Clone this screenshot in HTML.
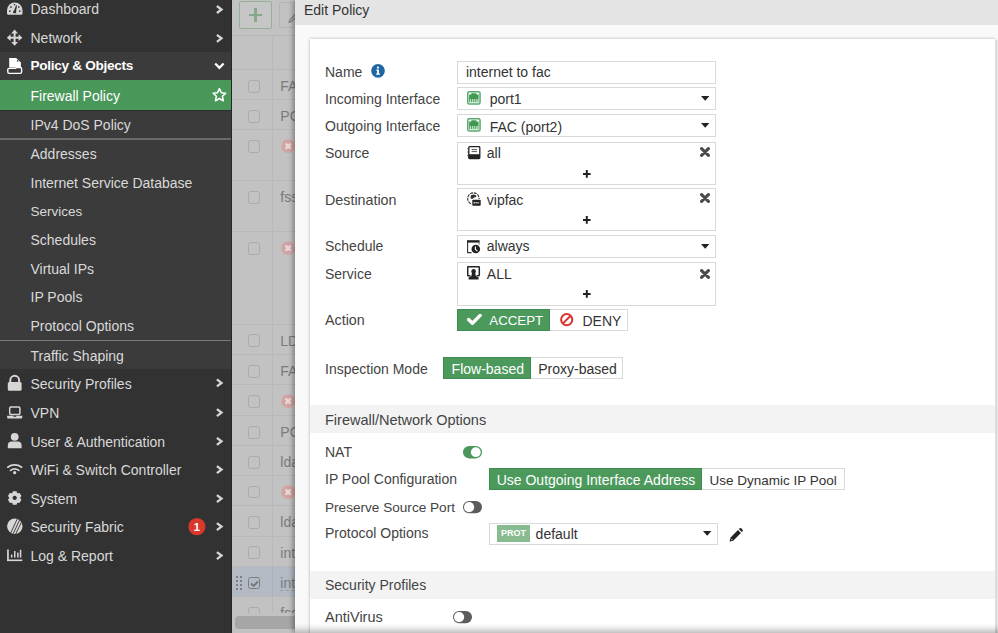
<!DOCTYPE html>
<html><head><meta charset="utf-8">
<style>
*{margin:0;padding:0;box-sizing:border-box}
html,body{width:998px;height:633px;overflow:hidden;background:#fff;font-family:"Liberation Sans",sans-serif;font-size:14px}
.a{position:absolute}
.t{position:absolute;white-space:nowrap;line-height:16px;font-size:14px}
#side{left:0;top:0;width:232px;height:633px;background:#323232}
.st{color:#d9d9d9;left:30.5px}
.ch{position:absolute;left:215px}
#tbl{left:232px;top:0;width:63px;height:633px;background:#fff;overflow:hidden}
#dlg{left:295px;top:0;width:703px;height:633px;background:#f9f9f9;box-shadow:-2px 0 5px rgba(0,0,0,.35)}
.lbl{color:#444;left:30px}
.inp{position:absolute;border:1px solid #d9d9d9;background:#fff}
.itx{color:#333}
.cbx{left:15.7px;width:12.8px;height:12.8px;border:1.4px solid #ababab;border-radius:2.5px}
.rl{left:0;width:63px;height:1px;background:#b8b8b8}
.dot{width:2.2px;height:2.2px;background:#7a8087}
.ttx{left:48.3px;color:#7a7a7a}
</style></head>
<body>
<!-- SIDEBAR -->
<div id="side" class="a">
  <div class="a" style="left:0;top:52px;width:231px;height:317px;background:#3b3b3b"></div>
  <div class="a" style="left:0;top:80px;width:231px;height:29.5px;background:#4a975a"></div>
  <div class="a" style="left:0;top:109.5px;width:231px;height:1px;background:#2e2e2e"></div>
  <div class="a" style="left:0;top:138.3px;width:231px;height:2px;background:#6a6a6a"></div>
  <div class="a" style="left:0;top:340px;width:231px;height:1px;background:#7a7a7a"></div>
  <div class="a" style="left:231px;top:0;width:1px;height:633px;background:#262626"></div>

  <div class="t st" style="top:1px">Dashboard</div>
  <div class="t st" style="top:29.8px">Network</div>
  <div class="t st" style="top:58px;color:#fff;font-weight:bold;font-size:13.6px;letter-spacing:-0.3px">Policy &amp; Objects</div>
  <div class="t st" style="top:88.1px;color:#fff">Firewall Policy</div>
  <div class="t st" style="top:117.1px">IPv4 DoS Policy</div>
  <div class="t st" style="top:146px">Addresses</div>
  <div class="t st" style="top:174.9px">Internet Service Database</div>
  <div class="t st" style="top:203.5px;font-size:13.5px">Services</div>
  <div class="t st" style="top:232px">Schedules</div>
  <div class="t st" style="top:260.6px">Virtual IPs</div>
  <div class="t st" style="top:289.2px">IP Pools</div>
  <div class="t st" style="top:318.3px">Protocol Options</div>
  <div class="t st" style="top:347.5px">Traffic Shaping</div>
  <div class="t st" style="top:375.6px">Security Profiles</div>
  <div class="t st" style="top:405.3px">VPN</div>
  <div class="t st" style="top:434px">User &amp; Authentication</div>
  <div class="t st" style="top:462.3px">WiFi &amp; Switch Controller</div>
  <div class="t st" style="top:491.3px">System</div>
  <div class="t st" style="top:519.3px">Security Fabric</div>
  <div class="t st" style="top:548.3px">Log &amp; Report</div>
  <svg class="a" style="left:0;top:0" width="232" height="633" viewBox="0 0 232 633">
    <g fill="#d6d6d6">
      <!-- dashboard gauge -->
      <path d="M8,14.7 H21.5 Q22.5,14.7 22.5,13.6 V10.2 A7.75,7.75 0 0 0 7,10.2 V13.6 Q7,14.7 8,14.7 Z"/>
      <g fill="#323232">
        <rect x="9.1" y="10.4" width="1.5" height="1.5"/><rect x="10.2" y="6.3" width="1.5" height="1.5"/>
        <rect x="18" y="6.3" width="1.5" height="1.5"/><rect x="19" y="10.4" width="1.5" height="1.5"/>
        <rect x="13.9" y="4" width="1.3" height="1.3"/>
        <path d="M13.3,12.6 L16.1,5.2 L17,5.5 L15.9,12.6 Z"/>
        <rect x="13.3" y="11" width="2.8" height="2.2"/>
      </g>
      <!-- network arrows -->
      <path d="M14.6,29.6 L18,33.4 L11.2,33.4 Z M14.6,45.7 L18,41.9 L11.2,41.9 Z M6.8,37.7 L10.6,34.3 L10.6,41.1 Z M22.4,37.7 L18.6,34.3 L18.6,41.1 Z"/>
      <rect x="13.6" y="32.5" width="2" height="10.3"/><rect x="10" y="36.7" width="9.2" height="2"/>
      <!-- lock -->
      <path d="M10.3,382.5 V380.2 A4.4,4.4 0 0 1 19.1,380.2 V382.5" fill="none" stroke="#d6d6d6" stroke-width="2"/>
      <rect x="7.8" y="382" width="13.8" height="8.8" rx="1.5"/>
      <!-- laptop -->
      <rect x="9.7" y="407" width="10.2" height="7.5" rx="1.2" fill="none" stroke="#d6d6d6" stroke-width="1.5"/>
      <path d="M7.1,415.8 H13.4 V416.8 H16.2 V415.8 H22.3 V417.2 Q22.3,418.4 21.1,418.4 H8.3 Q7.1,418.4 7.1,417.2 Z"/>
      <!-- user -->
      <circle cx="14.7" cy="436.8" r="3.9"/>
      <path d="M7.8,448.3 V445.6 Q7.8,441.6 11.8,441.6 H17.6 Q21.6,441.6 21.6,445.6 V448.3 Z"/>
      <!-- wifi -->
      <path d="M7.8,467.2 A11.5,11.5 0 0 1 21.6,467.2 M10.6,470.4 A7,7 0 0 1 18.8,470.4" fill="none" stroke="#d6d6d6" stroke-width="1.7" stroke-linecap="round"/>
      <circle cx="14.7" cy="472.7" r="1.6"/>
      <!-- gear -->
      <path fill-rule="evenodd" d="M11.98,493.47 L12.90,491.14 L16.50,491.14 L17.42,493.47 L17.18,493.33 L19.66,492.96 L21.46,496.08 L19.90,498.04 L19.90,497.76 L21.46,499.72 L19.66,502.84 L17.18,502.47 L17.42,502.33 L16.50,504.66 L12.90,504.66 L11.98,502.33 L12.22,502.47 L9.74,502.84 L7.94,499.72 L9.50,497.76 L9.50,498.04 L7.94,496.08 L9.74,492.96 L12.22,493.33Z M14.7,495.8 A2.1,2.1 0 1 0 14.71,495.8 Z"/>
      <!-- security fabric -->
      <circle cx="14.8" cy="526.3" r="7.7"/>
      <path d="M17.3,518.9 L10.6,533.2 M19.6,520.1 L13.1,533.9 M21.4,522.2 L15.7,534.1" stroke="#323232" stroke-width="0.9"/>
      <!-- log & report -->
      <rect x="7.1" y="549.5" width="1.7" height="11.6"/><rect x="7.1" y="559.5" width="15.2" height="1.6"/>
      <rect x="10.9" y="554.6" width="1.5" height="3"/><rect x="14" y="551" width="1.5" height="6.6"/>
      <rect x="17.1" y="552.6" width="1.5" height="5"/><rect x="19.8" y="549.8" width="1.5" height="7.8"/>
    </g>
    <!-- policy icon -->
    <g fill="#fff">
      <path d="M9.2,58.1 H16.1 L20.9,62.6 V67.6 H9.2 Z"/>
      <circle cx="17.6" cy="60.9" r="0.8" fill="#3b3b3b"/>
      <path d="M9,68.4 H15.5 L16.6,67.5 H20.4 Q21.6,67.5 21.6,68.9 V72 Q21.6,73.4 20.2,73.4 H9.2 Q7.8,73.4 7.8,72 V69.8 Q7.8,68.4 9,68.4 Z" fill="none" stroke="#fff" stroke-width="1.4"/>
    </g>
    <!-- chevrons -->
    <g fill="none" stroke="#d6d6d6" stroke-width="2.3">
      <path d="M216.9,6.0 L221.5,9.5 L216.9,13.0"/>
      <path d="M216.9,34.8 L221.5,38.3 L216.9,41.8"/>
      <path d="M216.9,379.4 L221.5,382.9 L216.9,386.4"/>
      <path d="M216.9,409.1 L221.5,412.6 L216.9,416.1"/>
      <path d="M216.9,437.8 L221.5,441.3 L216.9,444.8"/>
      <path d="M216.9,466.1 L221.5,469.6 L216.9,473.1"/>
      <path d="M216.9,495.1 L221.5,498.6 L216.9,502.1"/>
      <path d="M216.9,523.1 L221.5,526.6 L216.9,530.1"/>
      <path d="M216.9,552.1 L221.5,555.6 L216.9,559.1"/>
      <path d="M215.2,63.4 L219.4,67.8 L223.6,63.4" stroke="#fff" stroke-width="2.2"/>
    </g>
    <!-- star -->
    <path d="M219.4,88.6 L221.3,92.7 L225.7,93.2 L222.4,96.2 L223.3,100.8 L219.4,98.5 L215.5,100.8 L216.4,96.2 L213.1,93.2 L217.5,92.7 Z" fill="none" stroke="#fff" stroke-width="1.55" stroke-linejoin="round"/>
    <!-- badge -->
    <circle cx="196.9" cy="526.6" r="8.6" fill="#d9392b"/>
    <text x="196.9" y="530.7" fill="#fff" font-family="Liberation Sans" font-weight="bold" font-size="11" text-anchor="middle">1</text>
  </svg>
</div>

<!-- TABLE -->
<div id="tbl" class="a">
<div class="a" style="left:0;top:0;width:63px;height:633px;background:#c2c2c2"></div>
<div class="a" style="left:0;top:35px;width:63px;height:1px;background:#b6b6b6"></div>
<div class="a" style="left:40px;top:35.5px;width:1px;height:577px;background:#bababa"></div>
<div class="a rl" style="top:69.4px"></div>
<div class="a cbx" style="top:79.9px"></div>
<div class="t ttx" style="top:78.4px">FA</div>
<div class="a rl" style="top:99.3px"></div>
<div class="a cbx" style="top:109.8px"></div>
<div class="t ttx" style="top:108.3px">PO</div>
<div class="a rl" style="top:129.4px"></div>
<div class="a cbx" style="top:139.9px"></div>
<svg class="a" style="left:48.5px;top:139.0px" width="15" height="15"><circle cx="7.2" cy="7.2" r="6.9" fill="#d3a4a4"/><path d="M4.6,4.6 L9.8,9.8 M9.8,4.6 L4.6,9.8" stroke="#e6dada" stroke-width="2.3"/></svg>
<div class="a rl" style="top:180.3px"></div>
<div class="a cbx" style="top:190.8px"></div>
<div class="t ttx" style="top:189.3px">fss</div>
<div class="a rl" style="top:231.4px"></div>
<div class="a cbx" style="top:241.9px"></div>
<svg class="a" style="left:48.5px;top:241.0px" width="15" height="15"><circle cx="7.2" cy="7.2" r="6.9" fill="#d3a4a4"/><path d="M4.6,4.6 L9.8,9.8 M9.8,4.6 L4.6,9.8" stroke="#e6dada" stroke-width="2.3"/></svg>
<div class="a rl" style="top:323.8px"></div>
<div class="a cbx" style="top:334.3px"></div>
<div class="t ttx" style="top:332.8px">LD</div>
<div class="a rl" style="top:354.3px"></div>
<div class="a cbx" style="top:364.8px"></div>
<div class="t ttx" style="top:363.3px">FA</div>
<div class="a rl" style="top:384.4px"></div>
<div class="a cbx" style="top:394.9px"></div>
<svg class="a" style="left:48.5px;top:394.0px" width="15" height="15"><circle cx="7.2" cy="7.2" r="6.9" fill="#d3a4a4"/><path d="M4.6,4.6 L9.8,9.8 M9.8,4.6 L4.6,9.8" stroke="#e6dada" stroke-width="2.3"/></svg>
<div class="a rl" style="top:415.4px"></div>
<div class="a cbx" style="top:425.9px"></div>
<div class="t ttx" style="top:424.4px">PO</div>
<div class="a rl" style="top:445.3px"></div>
<div class="a cbx" style="top:455.8px"></div>
<div class="t ttx" style="top:454.3px">lda</div>
<div class="a rl" style="top:475.1px"></div>
<div class="a cbx" style="top:485.6px"></div>
<svg class="a" style="left:48.5px;top:484.7px" width="15" height="15"><circle cx="7.2" cy="7.2" r="6.9" fill="#d3a4a4"/><path d="M4.6,4.6 L9.8,9.8 M9.8,4.6 L4.6,9.8" stroke="#e6dada" stroke-width="2.3"/></svg>
<div class="a rl" style="top:505.3px"></div>
<div class="a cbx" style="top:515.8px"></div>
<div class="t ttx" style="top:514.3px">lda</div>
<div class="a rl" style="top:535.7px"></div>
<div class="a cbx" style="top:546.2px"></div>
<div class="t ttx" style="top:544.7px">int</div>
<div class="a rl" style="top:566.2px"></div>
<div class="a" style="left:0;top:566.7px;width:63px;height:29.5px;background:#b3bac4"></div>
<div class="a" style="left:40px;top:566.7px;width:1px;height:29.5px;background:#aab1ba"></div>
<div class="a cbx" style="top:576.7px;border-color:#7d7d7d;border-width:1.7px"></div>
<svg class="a" style="left:15.7px;top:576.7px" width="13" height="13"><path d="M3.1,6.5 L5.6,9 L10,4.3" fill="none" stroke="#767676" stroke-width="1.8"/></svg>
<div class="a dot" style="left:3.5px;top:575.5px"></div>
<div class="a dot" style="left:3.5px;top:579.5px"></div>
<div class="a dot" style="left:3.5px;top:583.5px"></div>
<div class="a dot" style="left:3.5px;top:587.5px"></div>
<div class="a dot" style="left:7.5px;top:575.5px"></div>
<div class="a dot" style="left:7.5px;top:579.5px"></div>
<div class="a dot" style="left:7.5px;top:583.5px"></div>
<div class="a dot" style="left:7.5px;top:587.5px"></div>
<div class="t ttx" style="top:575.2px">int</div>
<div class="a" style="left:48px;top:589.7px;width:20px;height:0;border-top:1px dashed #9aa0a8"></div>
<div class="a rl" style="top:596.2px"></div>
<div class="a cbx" style="top:606.7px"></div>
<div class="t ttx" style="top:605.2px">fss</div>
<div class="a" style="left:0;top:612.8px;width:63px;height:20.2px;background:#c2c2c2"></div>
<div class="a" style="left:3px;top:615.5px;width:80px;height:13.4px;background:#a6a6a6;border-radius:4px"></div>
<div class="a" style="left:7.4px;top:1.4px;width:32.9px;height:27.2px;border:1.4px solid #93b19a;border-radius:2px;background:#c6c6c6"></div>
<div class="a" style="left:17px;top:13.7px;width:13.4px;height:2.6px;background:#86a98d"></div>
<div class="a" style="left:22.4px;top:8.3px;width:2.6px;height:13.4px;background:#86a98d"></div>
<div class="a" style="left:47.4px;top:1.7px;width:40px;height:26.5px;border:1px solid #b5b5b5;border-radius:2px"></div>
<svg class="a" style="left:53px;top:8px" width="14" height="16"><path d="M6.5,13.5 L4.2,14.2 L4.9,11.9 L11,5.8 L12.6,7.4 Z" fill="none" stroke="#8a8a8a" stroke-width="1.4"/></svg>
</div>

<!-- DIALOG -->
<div id="dlg" class="a">
  <div class="a" style="left:0;top:0;width:703px;height:24.5px;background:#e4e4e4"></div>
  <div class="t" style="left:9px;top:2px;color:#333">Edit Policy</div>
  <div class="a" style="left:701px;top:40px;width:2px;height:600px;background:#e9e9e9"></div>
  <div class="a" style="left:14.6px;top:38.6px;width:685.8px;height:600px;background:#fff;box-shadow:0 0 3px rgba(0,0,0,.3)"></div>
</div>
<div id="form">
<div class="a" style="left:309.6px;top:405.4px;width:685.8px;height:28.1px;background:#f3f3f3"></div>
<div class="a" style="left:309.6px;top:571px;width:685.8px;height:27.6px;background:#f3f3f3"></div>
<div class="t" style="left:325px;top:64.0px;color:#444;">Name</div>
<div class="t" style="left:325px;top:90.6px;color:#444;">Incoming Interface</div>
<div class="t" style="left:325px;top:118.0px;color:#444;">Outgoing Interface</div>
<div class="t" style="left:325px;top:144.8px;color:#444;">Source</div>
<div class="t" style="left:325px;top:192.2px;color:#444;font-size:14.3px">Destination</div>
<div class="t" style="left:325px;top:237.9px;color:#444;">Schedule</div>
<div class="t" style="left:325px;top:265.6px;color:#444;">Service</div>
<div class="t" style="left:325px;top:311.8px;color:#444;font-size:14.3px">Action</div>
<div class="t" style="left:325px;top:360.9px;color:#444;">Inspection Mode</div>
<div class="t" style="left:325px;top:411.8px;color:#444;font-size:14.5px">Firewall/Network Options</div>
<div class="t" style="left:325px;top:444.4px;color:#444;">NAT</div>
<div class="t" style="left:325px;top:471.3px;color:#444;">IP Pool Configuration</div>
<div class="t" style="left:325px;top:499.6px;color:#444;font-size:13.6px">Preserve Source Port</div>
<div class="t" style="left:325px;top:525.2px;color:#444;">Protocol Options</div>
<div class="t" style="left:325px;top:577.2px;color:#444;">Security Profiles</div>
<div class="t" style="left:325px;top:609.0px;color:#444;font-size:14.5px">AntiVirus</div>
<svg class="a" style="left:371px;top:63.7px" width="14" height="14"><circle cx="7" cy="6.85" r="6.85" fill="#1f66a3"/><circle cx="7" cy="3.6" r="1.15" fill="#fff"/><path d="M5.3,5.6 H7.9 V9.6 H8.9 V10.8 H5.1 V9.6 H6.1 V6.8 H5.3 Z" fill="#fff"/></svg>
<div class="inp" style="left:457.3px;top:60.7px;width:258.7px;height:23.1px;"></div>
<div class="inp" style="left:457.3px;top:87.2px;width:258.7px;height:22.8px;"></div>
<div class="inp" style="left:457.3px;top:114.2px;width:258.7px;height:23.1px;"></div>
<div class="inp" style="left:457.3px;top:142.3px;width:258.7px;height:43.1px;"></div>
<div class="inp" style="left:457.3px;top:188.4px;width:258.7px;height:43.1px;"></div>
<div class="inp" style="left:457.3px;top:235px;width:258.7px;height:22.8px;"></div>
<div class="inp" style="left:457.3px;top:262.2px;width:258.7px;height:43.4px;"></div>
<div class="t" style="left:465.9px;top:63.5px;color:#333;">internet to fac</div>
<div class="t" style="left:489.7px;top:90.7px;color:#333;">port1</div>
<div class="t" style="left:489.7px;top:118.5px;color:#333;">FAC (port2)</div>
<div class="t" style="left:486.8px;top:144.8px;color:#333;">all</div>
<div class="t" style="left:486.8px;top:191.6px;color:#333;">vipfac</div>
<div class="t" style="left:486.8px;top:238.1px;color:#333;">always</div>
<div class="t" style="left:486.8px;top:265.9px;color:#333;">ALL</div>
<svg class="a" style="left:700.9px;top:96.0px" width="9" height="5"><path d="M0,0 H8.4 L4.2,4.8 Z" fill="#222"/></svg>
<svg class="a" style="left:700.9px;top:123.1px" width="9" height="5"><path d="M0,0 H8.4 L4.2,4.8 Z" fill="#222"/></svg>
<svg class="a" style="left:700.9px;top:244.0px" width="9" height="5"><path d="M0,0 H8.4 L4.2,4.8 Z" fill="#222"/></svg>
<svg class="a" style="left:700px;top:146.9px" width="10" height="10"><path d="M1.6,1.6 L8.4,8.4 M8.4,1.6 L1.6,8.4" stroke="#4a4a4a" stroke-width="3.1" stroke-linecap="round"/></svg>
<svg class="a" style="left:700px;top:193.0px" width="10" height="10"><path d="M1.6,1.6 L8.4,8.4 M8.4,1.6 L1.6,8.4" stroke="#4a4a4a" stroke-width="3.1" stroke-linecap="round"/></svg>
<svg class="a" style="left:700px;top:268.7px" width="10" height="10"><path d="M1.6,1.6 L8.4,8.4 M8.4,1.6 L1.6,8.4" stroke="#4a4a4a" stroke-width="3.1" stroke-linecap="round"/></svg>
<svg class="a" style="left:582.8px;top:170.0px" width="8" height="8"><path d="M3.8,0 V7.8 M0,3.9 H7.6" stroke="#222" stroke-width="2"/></svg>
<svg class="a" style="left:582.8px;top:216.4px" width="8" height="8"><path d="M3.8,0 V7.8 M0,3.9 H7.6" stroke="#222" stroke-width="2"/></svg>
<svg class="a" style="left:582.8px;top:290.4px" width="8" height="8"><path d="M3.8,0 V7.8 M0,3.9 H7.6" stroke="#222" stroke-width="2"/></svg>
<svg class="a" style="left:467px;top:91.2px" width="14" height="14"><rect x="0.75" y="0.75" width="12.3" height="12.3" rx="1.6" fill="#fff" stroke="#5aa96b" stroke-width="1.5"/><path d="M2.1,3.4 H4.3 V2.3 H9.4 V3.4 H11.6 V12 H2.1 Z" fill="#3f9a52"/><path d="M3.5,8 V11.6 M5.4,8 V11.6 M7.3,8 V11.6 M9.2,8 V11.6 M10.9,8 V11.6" stroke="#d8eedc" stroke-width="0.9"/><path d="M2.1,11.4 H11.6" stroke="#fff" stroke-width="0.8"/></svg>
<svg class="a" style="left:467px;top:118.3px" width="14" height="14"><rect x="0.75" y="0.75" width="12.3" height="12.3" rx="1.6" fill="#fff" stroke="#5aa96b" stroke-width="1.5"/><path d="M2.1,3.4 H4.3 V2.3 H9.4 V3.4 H11.6 V12 H2.1 Z" fill="#3f9a52"/><path d="M3.5,8 V11.6 M5.4,8 V11.6 M7.3,8 V11.6 M9.2,8 V11.6 M10.9,8 V11.6" stroke="#d8eedc" stroke-width="0.9"/><path d="M2.1,11.4 H11.6" stroke="#fff" stroke-width="0.8"/></svg>
<svg class="a" style="left:467px;top:145.9px" width="14" height="14"><rect x="1.8" y="0.7" width="11" height="11.8" rx="0.8" fill="#fff" stroke="#222" stroke-width="1.3"/><rect x="1.8" y="8.2" width="11" height="4.5" fill="#222"/><path d="M4.6,3.6 H10 M4.6,5.6 H10" stroke="#555" stroke-width="1"/><circle cx="0.9" cy="2.6" r="0.6" fill="#444"/><circle cx="0.9" cy="5.9" r="0.6" fill="#444"/><circle cx="0.9" cy="9.4" r="0.6" fill="#444"/></svg>
<svg class="a" style="left:467px;top:191.9px" width="14" height="14"><circle cx="6.4" cy="6.6" r="5.7" fill="none" stroke="#333" stroke-width="1.1" stroke-dasharray="3,0.8"/><path d="M4,3.3 L6.5,2.4 L8.6,3 L9.6,4.6 L7.4,5.6 L5.2,7 L3.4,6.2 Z" fill="#333"/><rect x="4.6" y="7" width="9.4" height="7" rx="1" fill="#fff"/><rect x="5.3" y="7.7" width="8.4" height="6" rx="0.9" fill="#222"/><path d="M6.6,10.7 H12.4" stroke="#ddd" stroke-width="1.4" stroke-dasharray="1.3,0.6"/></svg>
<svg class="a" style="left:467.2px;top:239.6px" width="14" height="14"><path d="M0.6,2 V12.6 H4.6" fill="none" stroke="#333" stroke-width="1.1"/><rect x="0" y="0.2" width="12.6" height="2.4" fill="#222"/><path d="M12.1,2.4 V4.8" stroke="#666" stroke-width="1"/><circle cx="8.8" cy="9" r="4.3" fill="#222"/><path d="M8.4,6.6 V9.4 L10.4,11.2" fill="none" stroke="#fff" stroke-width="1.1"/></svg>
<svg class="a" style="left:467.2px;top:266.1px" width="14" height="14"><path d="M3.4,9.8 H1.4 Q0.7,9.8 0.7,9.1 V1.4 Q0.7,0.7 1.4,0.7 H11.6 Q12.3,0.7 12.3,1.4 V9.1 Q12.3,9.8 11.6,9.8 H9.6" fill="none" stroke="#222" stroke-width="1.5"/><circle cx="6.6" cy="5.4" r="2.3" fill="#222"/><path d="M4.9,7 H8.3 L8.8,10 L11.6,11.6 V13.6 H1.6 V11.6 L4.4,10 Z" fill="#222"/></svg>
<div class="a" style="left:457.4px;top:308.9px;width:92.6px;height:22.2px;background:#4c995c;border:1px solid #3e8c4f"></div>
<svg class="a" style="left:466.5px;top:314px" width="15" height="12"><path d="M1.6,5.6 L5.4,9.2 L13.2,1.4" fill="none" stroke="#fff" stroke-width="3.4" stroke-linecap="round" stroke-linejoin="round"/></svg>
<div class="t" style="left:489.3px;top:313.0px;color:#fff;font-size:13.3px">ACCEPT</div>
<div class="inp" style="left:550px;top:308.9px;width:77.6px;height:22.2px;border-left:0"></div>
<svg class="a" style="left:559.5px;top:313.2px" width="14" height="14"><circle cx="6.7" cy="6.7" r="5.6" fill="none" stroke="#d9342b" stroke-width="2"/><path d="M2.8,10.6 L10.6,2.8" stroke="#d9342b" stroke-width="2"/></svg>
<div class="t" style="left:582.5px;top:313.0px;color:#333;">DENY</div>
<div class="a" style="left:443px;top:357.4px;width:87.6px;height:22.1px;background:#4c995c;border:1px solid #3e8c4f"></div>
<div class="t" style="left:451.6px;top:360.5px;color:#fff;">Flow-based</div>
<div class="inp" style="left:530.6px;top:357.4px;width:92.8px;height:22.1px;border-left:0"></div>
<div class="t" style="left:538.2px;top:360.5px;color:#333;">Proxy-based</div>
<svg class="a" style="left:462.8px;top:446.3px" width="20" height="13"><rect x="0" y="0" width="19" height="12.4" rx="6.2" fill="#4a975a"/><circle cx="12.8" cy="6.2" r="4.9" fill="#fff"/></svg>
<div class="a" style="left:488.7px;top:467.6px;width:213px;height:22.6px;background:#4c995c;border:1px solid #3e8c4f"></div>
<div class="t" style="left:496.7px;top:472.2px;color:#fff;">Use Outgoing Interface Address</div>
<div class="inp" style="left:701.7px;top:467.6px;width:143.5px;height:22.6px;border-left:0"></div>
<div class="t" style="left:709.5px;top:472.6px;color:#333;font-size:13.5px">Use Dynamic IP Pool</div>
<svg class="a" style="left:463px;top:500.7px" width="20" height="13"><rect x="0" y="0" width="19" height="12.2" rx="6.1" fill="#5c5c5c"/><circle cx="6.1" cy="6.1" r="5.1" fill="#fff"/></svg>
<svg class="a" style="left:452.6px;top:611.3px" width="20" height="13"><rect x="0" y="0" width="19" height="12.2" rx="6.1" fill="#5c5c5c"/><circle cx="6.1" cy="6.1" r="5.1" fill="#fff"/></svg>
<div class="inp" style="left:488.7px;top:522.5px;width:229.5px;height:22.0px;"></div>
<div class="a" style="left:496.8px;top:525.2px;width:33.5px;height:16.8px;background:#88bb8f;color:#fff;font-weight:bold;font-size:9px;line-height:16.8px;text-align:center">PROT</div>
<div class="t" style="left:535.6px;top:526.0px;color:#333;">default</div>
<svg class="a" style="left:702.8px;top:530.6px" width="9" height="5"><path d="M0,0 H8.4 L4.2,4.8 Z" fill="#222"/></svg>
<svg class="a" style="left:729px;top:527.6px" width="14" height="14"><path d="M0.6,13.4 L1.3,9.8 L9,2.1 L11.9,5 L4.2,12.7 Z" fill="#222"/><path d="M1.9,10.6 L3.4,12.1" stroke="#fff" stroke-width="0.9"/><path d="M9.9,1.2 L11,0.2 Q11.5,-0.2 12,0.2 L13.8,2 Q14.2,2.5 13.8,3 L12.8,4.1 Z" fill="#222"/></svg>
<div class="a" style="left:295px;top:623px;width:703px;height:10px;background:linear-gradient(rgba(0,0,0,0),rgba(0,0,0,.05) 40%,rgba(0,0,0,.24))"></div>
</div>
</body></html>
